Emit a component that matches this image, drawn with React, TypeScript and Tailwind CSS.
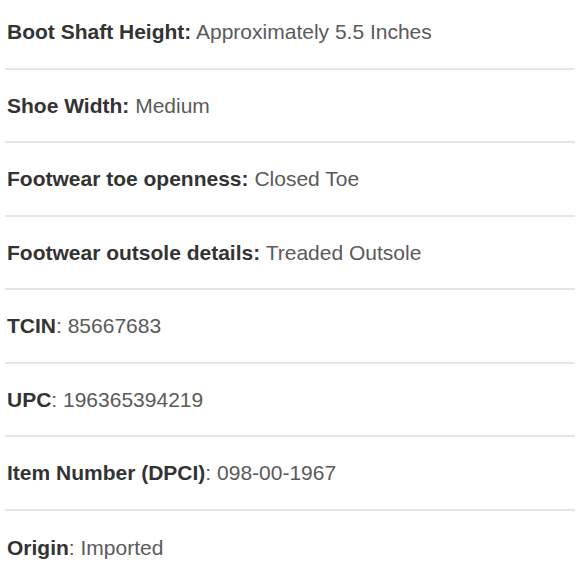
import React from "react";

const rows: [string, string, boolean][] = [
  ["Boot Shaft Height:", "Approximately 5.5 Inches", true],
  ["Shoe Width:", "Medium", true],
  ["Footwear toe openness:", "Closed Toe", true],
  ["Footwear outsole details:", "Treaded Outsole", true],
  ["TCIN", "85667683", false],
  ["UPC", "196365394219", false],
  ["Item Number (DPCI)", "098-00-1967", false],
  ["Origin", "Imported", false],
];

export default function App() {
  return (
    <div
      className="w-[580px] h-[580px] overflow-hidden bg-white"
      style={{ fontFamily: '"Liberation Sans", Arial, sans-serif' }}
    >
      <div className="-mt-[4px] px-[5px]">
        {rows.map(([k, v, colonInLabel], i) => (
          <div
            key={i}
            className={`flex items-center h-[73.5px] pl-[2px] pt-[1px] text-[21px] leading-[24px] ${
              i < rows.length - 1 ? "border-b-2 border-[#e6e6e6]" : ""
            }`}
          >
            <span className="whitespace-nowrap">
              <span className="font-bold text-[#333333]">{k}</span>
              {colonInLabel ? (
                <span className="text-[#5a5a5a]"> {v}</span>
              ) : (
                <span className="text-[#5a5a5a]">: {v}</span>
              )}
            </span>
          </div>
        ))}
      </div>
    </div>
  );
}
